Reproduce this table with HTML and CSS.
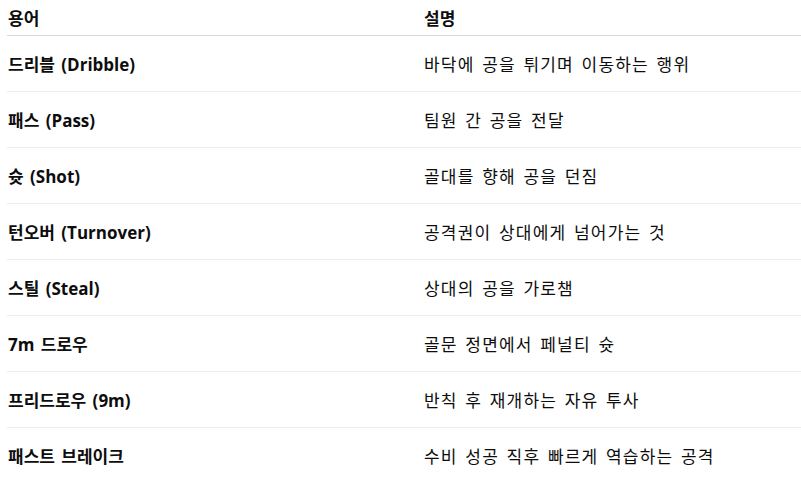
FILE: index.html
```html
<!DOCTYPE html>
<html lang="ko">
<head>
<meta charset="utf-8">
<link rel="stylesheet" href="styles.css">
</head>
<body>
<table class="terms">
  <thead>
    <tr><th>용어</th><th>설명</th></tr>
  </thead>
  <tbody>
    <tr><td>드리블 (Dribble)</td><td>바닥에 공을 튀기며 이동하는 행위</td></tr>
    <tr><td>패스 (Pass)</td><td>팀원 간 공을 전달</td></tr>
    <tr><td>슛 (Shot)</td><td>골대를 향해 공을 던짐</td></tr>
    <tr><td>턴오버 (Turnover)</td><td>공격권이 상대에게 넘어가는 것</td></tr>
    <tr><td>스틸 (Steal)</td><td>상대의 공을 가로챔</td></tr>
    <tr><td>7m 드로우</td><td>골문 정면에서 페널티 슛</td></tr>
    <tr><td>프리드로우 (9m)</td><td>반칙 후 재개하는 자유 투사</td></tr>
    <tr><td>패스트 브레이크</td><td>수비 성공 직후 빠르게 역습하는 공격</td></tr>
  </tbody>
</table>
</body>
</html>
```
FILE: styles.css
```css
html, body {
  margin: 0;
  padding: 0;
  background: #ffffff;
}
body {
  padding-left: 7px;
  font-family: "Open Sans", "Noto Sans CJK KR", sans-serif;
  color: #0d0d0d;
  font-size: 17px;
  word-spacing: 2px;
}
.terms {
  border-collapse: collapse;
  width: 794px;
}
.terms th, .terms td {
  text-align: left;
  padding: 0 0 0 1px;
  vertical-align: middle;
}
.terms th:first-child, .terms td:first-child {
  width: 415px;
}
.terms th {
  font-weight: 700;
  height: 35px;
  border-bottom: 1px solid #d9d9d9;
}
.terms td {
  height: 55px;
  border-bottom: 1px solid #ececec;
  letter-spacing: 1.2px;
}
.terms td:first-child {
  font-weight: 700;
  letter-spacing: 0;
}
.terms tr:last-child td {
  border-bottom: none;
}
```
